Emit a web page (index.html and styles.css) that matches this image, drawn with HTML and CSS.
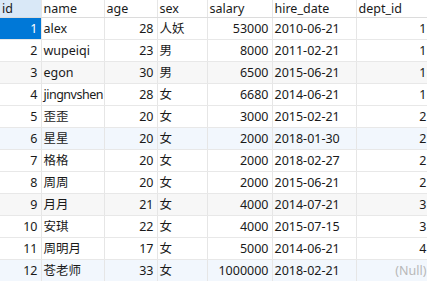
FILE: index.html
```html
<!DOCTYPE html>
<html lang="zh">
<head>
  <meta charset="UTF-8">
  <title>employee</title>
  <link rel="stylesheet" href="styles.css">
</head>
<body>
  <table class="grid">
    <colgroup>
      <col class="c-id">
      <col class="c-name">
      <col class="c-age">
      <col class="c-sex">
      <col class="c-salary">
      <col class="c-date">
      <col class="c-dept">
    </colgroup>
    <thead>
      <tr>
        <th class="sel">id</th>
        <th>name</th>
        <th>age</th>
        <th>sex</th>
        <th>salary</th>
        <th>hire_date</th>
        <th>dept_id</th>
      </tr>
    </thead>
    <tbody>
      <tr><td class="num cur">1</td><td>alex</td><td class="num">28</td><td>人妖</td><td class="num">53000</td><td>2010-06-21</td><td class="num">1</td></tr>
      <tr><td class="num">2</td><td>wupeiqi</td><td class="num">23</td><td>男</td><td class="num">8000</td><td>2011-02-21</td><td class="num">1</td></tr>
      <tr class="grey"><td class="num">3</td><td>egon</td><td class="num">30</td><td>男</td><td class="num">6500</td><td>2015-06-21</td><td class="num">1</td></tr>
      <tr><td class="num">4</td><td class="tight">jingnvshen</td><td class="num">28</td><td>女</td><td class="num">6680</td><td>2014-06-21</td><td class="num">1</td></tr>
      <tr><td class="num">5</td><td>歪歪</td><td class="num">20</td><td>女</td><td class="num">3000</td><td>2015-02-21</td><td class="num">2</td></tr>
      <tr class="blue"><td class="num">6</td><td>星星</td><td class="num">20</td><td>女</td><td class="num">2000</td><td>2018-01-30</td><td class="num">2</td></tr>
      <tr><td class="num">7</td><td>格格</td><td class="num">20</td><td>女</td><td class="num">2000</td><td>2018-02-27</td><td class="num">2</td></tr>
      <tr><td class="num">8</td><td>周周</td><td class="num">20</td><td>女</td><td class="num">2000</td><td>2015-06-21</td><td class="num">2</td></tr>
      <tr class="grey"><td class="num">9</td><td>月月</td><td class="num">21</td><td>女</td><td class="num">4000</td><td>2014-07-21</td><td class="num">3</td></tr>
      <tr><td class="num">10</td><td>安琪</td><td class="num">22</td><td>女</td><td class="num">4000</td><td>2015-07-15</td><td class="num">3</td></tr>
      <tr><td class="num">11</td><td>周明月</td><td class="num">17</td><td>女</td><td class="num">5000</td><td>2014-06-21</td><td class="num">4</td></tr>
      <tr class="blue"><td class="num">12</td><td>苍老师</td><td class="num">33</td><td>女</td><td class="num">1000000</td><td>2018-02-21</td><td class="num null">(Null)</td></tr>
    </tbody>
  </table>
</body>
</html>
```

FILE: styles.css
```css
html, body {
  margin: 0;
  padding: 0;
  background: #ffffff;
  overflow: hidden;
}

.grid {
  border-collapse: collapse;
  table-layout: fixed;
  width: 430px;
  font-family: "Noto Sans", "Noto Sans CJK SC", sans-serif;
  font-size: 12.5px;
  color: #1a1a1a;
}

.c-id { width: 41px; }
.c-name { width: 63px; }
.c-age { width: 53px; }
.c-sex { width: 50px; }
.c-salary { width: 65px; }
.c-date { width: 84px; }
.c-dept { width: 74px; }

th, td {
  padding: 0 0 0 2px;
  border-right: 1px solid #e6e6e6;
  border-bottom: 1px solid #e8e8e8;
  white-space: nowrap;
  overflow: hidden;
  text-align: left;
  font-weight: normal;
}

th {
  height: 17px;
  line-height: 17px;
  border-bottom-color: #dcdcdc;
  vertical-align: middle;
}

th.sel {
  background: #d9e8f7;
}

td {
  height: 21px;
  line-height: 21px;
}

td.num {
  text-align: right;
  padding-right: 3px;
}

td.tight {
  letter-spacing: -0.5px;
}

tr.grey td { background: #f7f7f7; }
tr.blue td { background: #f2f7fd; }

td.cur {
  background: #0078d7;
  color: #ffffff;
}

td.null {
  color: #b8b8b8;
}
```
